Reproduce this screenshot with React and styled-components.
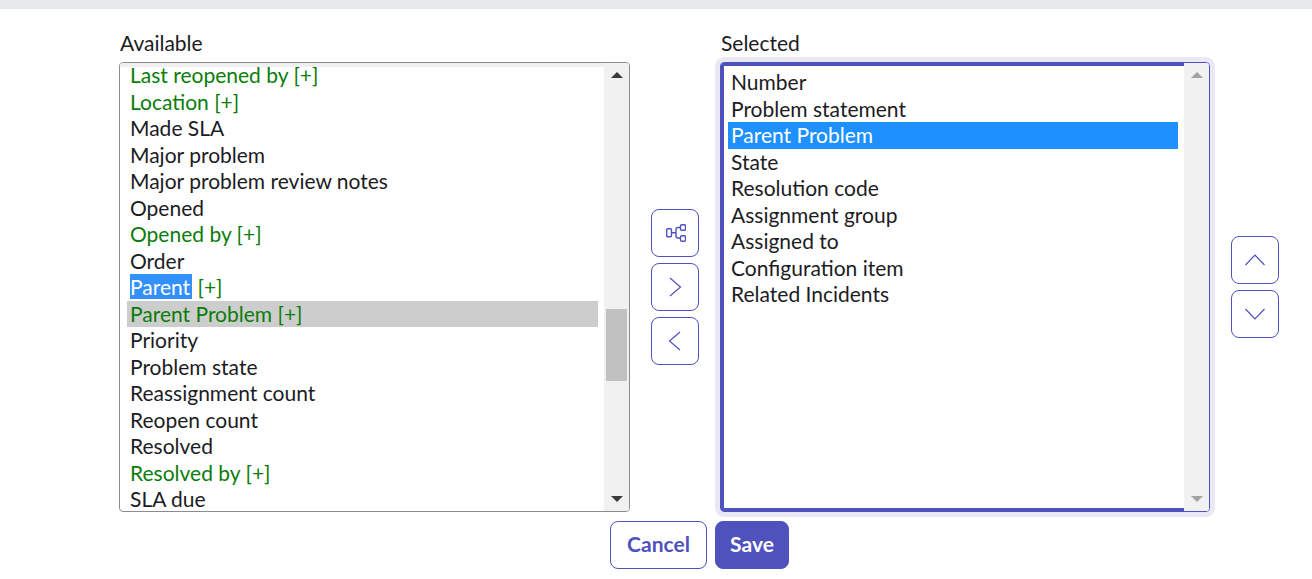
import React from "react";
import styled, { createGlobalStyle } from "styled-components";

const Global = createGlobalStyle`
  html, body { margin: 0; padding: 0; background: #fff; }
  body { font-family: Lato, "Open Sans", sans-serif; color: #1c1c24; overflow: hidden; }
  #root { width: 1312px; height: 579px; overflow: hidden; }
`;

const TopBar = styled.div`height: 9px; background: #e6e8eb;`;
const Panel = styled.div`padding: 21px 0 0 119px;`;
const Columns = styled.div`display: flex; align-items: flex-start;`;
const Column = styled.div`display: flex; flex-direction: column; width: ${p => p.$w}px; margin-left: ${p => p.$ml || 0}px;`;
const Label = styled.div`font-size: 21px; line-height: 26px; height: 32px; padding-left: ${p => p.$pl}px;`;
const ListFrame = styled.div`
  box-sizing: border-box; height: 450px; display: flex; overflow: hidden; border-radius: 4px;
  border: 1px solid ${p => (p.$focus ? "#4f52bd" : "#8b8b93")};
  ${p => p.$focus && "box-shadow: 0 0 0 5px #e9e9f6;"}
`;
const List = styled.div`
  flex: 1; min-width: 0; box-sizing: border-box; overflow: hidden;
  padding: ${p => (p.$focus ? "3px 6px 0 4px" : "0 6px 0 7px")};
  ${p => (p.$focus
    ? "border: 3px solid #4f52bd; border-right: none;"
    : "margin-top: -1px; box-shadow: inset 0 5px 0 #f0f0f0;")}
`;
const Row = styled.div`
  height: 26.5px; line-height: 26.5px; font-size: 21px; white-space: nowrap; padding-left: 3px;
  color: ${p => (p.$tree ? "#0a7d0a" : "#1c1c24")};
  background: ${p => (p.$active === "blue" ? "#1e90ff" : p.$active === "gray" ? "#cdcdcd" : "transparent")};
  ${p => p.$active === "blue" && "color: #fff;"}
`;
const Mark = styled.span`background: #3390ff; color: #fff; display: inline-block; line-height: 25px; padding-right: 2px;`;
const Scrollbar = styled.div`
  width: 25px; flex: none; background: #f1f1f1; display: flex; flex-direction: column; align-items: center;
  justify-content: space-between; padding: 9px 0; box-sizing: border-box;
`;
const Track = styled.div`flex: 1; width: 21px; padding-top: ${p => p.$offset}px;`;
const Thumb = styled.div`height: ${p => p.$h}px; background: #c1c1c1;`;
const Arrow = styled.div`
  width: 0; height: 0; border-left: 6px solid transparent; border-right: 6px solid transparent;
  ${p => (p.$down ? `border-top: 6px solid ${p.$c};` : `border-bottom: 6px solid ${p.$c};`)}
`;
const BtnStack = styled.div`
  display: flex; flex-direction: column; gap: 6px; width: 48px; flex: none;
  margin-left: ${p => p.$ml}px; margin-top: ${p => p.$mt}px;
`;
const IconBtn = styled.button`
  width: 48px; height: 48px; box-sizing: border-box; padding: 0; background: #fff; color: #4f52bd;
  border: 1px solid #4f52bd; border-radius: 8px; display: flex; align-items: center; justify-content: center;
`;
const Footer = styled.div`display: flex; gap: 8px; margin: 9px 0 0 491px;`;
const ActionBtn = styled.button`
  height: 48px; box-sizing: border-box; width: ${p => p.$w}px; padding: 0 0 3px; border-radius: 8px;
  font: 700 21px/1 Lato, sans-serif; border: 1px solid #4f52bd;
  background: ${p => (p.$primary ? "#4f52bd" : "#fff")};
  color: ${p => (p.$primary ? "#fff" : "#4f52bd")};
`;

const available = [
  ["Last reopened by [+]", 1], ["Location [+]", 1], ["Made SLA"], ["Major problem"],
  ["Major problem review notes"], ["Opened"], ["Opened by [+]", 1], ["Order"], ["PARENT", 1],
  ["Parent Problem [+]", 1, "gray"], ["Priority"], ["Problem state"], ["Reassignment count"],
  ["Reopen count"], ["Resolved"], ["Resolved by [+]", 1], ["SLA due"],
];
const selected = [
  "Number", "Problem statement", "Parent Problem", "State", "Resolution code",
  "Assignment group", "Assigned to", "Configuration item", "Related Incidents",
];

const Chevron = ({ d }) => (
  <svg width="24" height="24" viewBox="0 0 24 24" fill="none" stroke="currentColor" strokeWidth="1.2">
    <path d={d} />
  </svg>
);
const TreeIcon = () => (
  <svg width="22" height="22" viewBox="0 0 22 22" fill="none" stroke="currentColor" strokeWidth="1.4">
    <rect x="2.7" y="6.7" width="4.8" height="8" rx="1" />
    <rect x="16.5" y="2.7" width="5" height="5.6" rx="1.4" />
    <rect x="16.5" y="13.7" width="5" height="5.6" rx="1.4" />
    <path d="M7.5 10.7H12M16.5 5.5H14a2 2 0 0 0-2 2v6.5a2 2 0 0 0 2 2h2.5" />
  </svg>
);

export default function App() {
  return (
    <>
      <Global />
      <TopBar />
      <Panel>
        <Columns>
          <Column $w={511}>
            <Label $pl={1}>Available</Label>
            <ListFrame>
              <List>
                {available.map(([t, tree, active]) => (
                  <Row key={t} $tree={tree} $active={active}>
                    {t === "PARENT" ? <><Mark>Parent</Mark> [+]</> : t}
                  </Row>
                ))}
              </List>
              <Scrollbar>
                <Arrow $c="#3a3a3a" />
                <Track $offset={231}><Thumb $h={72} /></Track>
                <Arrow $down $c="#3a3a3a" />
              </Scrollbar>
            </ListFrame>
          </Column>
          <BtnStack $ml={21} $mt={179}>
            <IconBtn><TreeIcon /></IconBtn>
            <IconBtn><Chevron d="M7 3 17.5 12 7 21" /></IconBtn>
            <IconBtn><Chevron d="M17 3 6.5 12 17 21" /></IconBtn>
          </BtnStack>
          <Column $w={490} $ml={21}>
            <Label $pl={1}>Selected</Label>
            <ListFrame $focus>
              <List $focus>
                {selected.map(t => (
                  <Row key={t} $active={t === "Parent Problem" ? "blue" : undefined}>{t}</Row>
                ))}
              </List>
              <Scrollbar>
                <Arrow $c="#a3a3a3" />
                <Arrow $down $c="#a3a3a3" />
              </Scrollbar>
            </ListFrame>
          </Column>
          <BtnStack $ml={21} $mt={206}>
            <IconBtn><Chevron d="M2.5 17 12 7 21.5 17" /></IconBtn>
            <IconBtn><Chevron d="M2.5 7 12 17 21.5 7" /></IconBtn>
          </BtnStack>
        </Columns>
        <Footer>
          <ActionBtn $w={97}>Cancel</ActionBtn>
          <ActionBtn $w={74} $primary>Save</ActionBtn>
        </Footer>
      </Panel>
    </>
  );
}
